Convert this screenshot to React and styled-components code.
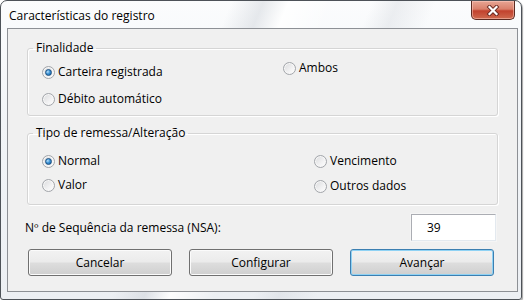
import styled, { createGlobalStyle } from "styled-components";

const GlobalStyle = createGlobalStyle`
  body {
    margin: 0;
    background: #ffffff;
    font-family: "Open Sans", "Noto Sans", sans-serif;
    font-size: 12px;
    color: #000;
  }
`;

const Window = styled.div`
  width: 522px;
  height: 300px;
  box-sizing: border-box;
  border: 1px solid #4d5258;
  border-radius: 7px 7px 3px 3px;
  box-shadow: 1px 1px 1px rgba(0, 0, 0, 0.35);
  display: flex;
  flex-direction: column;
  padding: 0 3px 7px 6px;
  background:
    linear-gradient(112deg, transparent 36%, rgba(190, 196, 204, 0.35) 41%, rgba(255, 255, 255, 0.9) 45%, transparent 52%),
    linear-gradient(112deg, transparent 58%, rgba(200, 205, 212, 0.3) 62%, transparent 68%),
    linear-gradient(to bottom, #fbfcfd 0%, #f1f4f7 40%, #eceff3 100%);
`;

const TitleBar = styled.div`
  height: 27px;
  display: flex;
  align-items: flex-start;
  justify-content: space-between;
`;

const Title = styled.span`
  padding: 6px 0 0 2px;
  font-size: 12px;
`;

const CloseButton = styled.div`
  width: 44px;
  height: 19px;
  box-sizing: border-box;
  margin-right: 3px;
  border: 1px solid #5c2b22;
  border-top: none;
  border-radius: 0 0 5px 5px;
  display: flex;
  align-items: center;
  justify-content: center;
  background: linear-gradient(to bottom, #e7a594 0%, #d9806b 45%, #c2422e 55%, #cf6a4f 100%);
  box-shadow: inset 0 0 0 1px rgba(255, 210, 200, 0.5);
`;

const Client = styled.div`
  flex: 1;
  border: 1px solid #8d9095;
  background: #f0f0f0;
  display: flex;
  flex-direction: column;
  padding-top: 11px;
`;

const Group = styled.fieldset`
  margin: ${(p) => p.$top || 0}px 19px 0 19px;
  padding: 0;
  border: 1px solid #d5d5d5;
  border-radius: 3px;
  min-width: 0;
  box-shadow: inset 1px 1px 0 #fff, 1px 1px 0 #fff;
`;

const Legend = styled.legend`
  margin-left: 5px;
  padding: 0 3px;
  line-height: 16px;
  font-size: 12px;
`;

const Options = styled.div`
  display: grid;
  grid-template-columns: ${(p) => p.$col}px 1fr;
  padding: 0 0 ${(p) => p.$bottom}px 14px;
`;

const Column = styled.div`
  display: flex;
  flex-direction: column;
  gap: ${(p) => p.$gap}px;
  padding-top: ${(p) => p.$top}px;
`;

const Option = styled.label`
  display: flex;
  align-items: center;
  gap: 3px;
  height: 16px;
  line-height: 16px;
`;

const Radio = styled.span`
  position: relative;
  width: 13px;
  height: 13px;
  box-sizing: border-box;
  border-radius: 50%;
  border: 1px solid #a2a5aa;
  background: linear-gradient(135deg, #d9dadc 0%, #f2f2f3 60%, #ffffff 100%);
  box-shadow: inset 0 0 0 1px #f7f7f7;
  &::after {
    content: "";
    display: ${(p) => (p.$checked ? "block" : "none")};
    position: absolute;
    left: 2px;
    top: 2px;
    width: 7px;
    height: 7px;
    box-sizing: border-box;
    border-radius: 50%;
    border: 1px solid #1b4f80;
    background: radial-gradient(circle at 35% 35%, #b9e2fb 0%, #3d93d6 45%, #0e5a9b 100%);
  }
`;

const FieldRow = styled.div`
  display: flex;
  align-items: center;
  justify-content: space-between;
  height: 27px;
  margin: 9px 21px 0 17px;
`;

const NumberBox = styled.div`
  width: 85px;
  height: 27px;
  box-sizing: border-box;
  background: #fff;
  border: 1px solid #abadb3;
  border-color: #abadb3 #e3e9ef #e3e9ef #abadb3;
  box-shadow: 0 0 0 1px #f5f5f5;
  padding: 0 0 0 15px;
  display: flex;
  align-items: center;
`;

const ButtonRow = styled.div`
  display: flex;
  gap: 17px;
  margin: 8px 0 0 20px;
`;

const Button = styled.div`
  width: 144px;
  height: 27px;
  box-sizing: border-box;
  border: 1px solid ${(p) => (p.$default ? "#3c7fb1" : "#707070")};
  border-radius: 3px;
  display: flex;
  align-items: center;
  justify-content: center;
  background: linear-gradient(to bottom, #f2f2f2 0%, #ebebeb 48%, #dddddd 52%, #cfcfcf 100%);
  box-shadow: inset 0 0 0 1px ${(p) => (p.$default ? "#8fd2f4" : "#fbfbfb")};
`;

const CloseIcon = () => (
  <svg width="14" height="11" viewBox="0 0 14 11">
    <path d="M3.5 2 L10.5 9 M10.5 2 L3.5 9" stroke="#6a2a22" strokeWidth="4" strokeLinecap="square" />
    <path d="M3.5 2 L10.5 9 M10.5 2 L3.5 9" stroke="#ffffff" strokeWidth="2.2" strokeLinecap="square" />
  </svg>
);

const RadioOption = ({ checked, children }) => (
  <Option>
    <Radio $checked={checked} />
    {children}
  </Option>
);

const App = () => {
  return (
    <>
      <GlobalStyle />
      <Window>
        <TitleBar>
          <Title>Características do registro</Title>
          <CloseButton>
            <CloseIcon />
          </CloseButton>
        </TitleBar>
        <Client>
          <Group>
            <Legend>Finalidade</Legend>
            <Options $col={241} $bottom={8}>
              <Column $top={8} $gap={11}>
                <RadioOption checked>Carteira registrada</RadioOption>
                <RadioOption>Débito automático</RadioOption>
              </Column>
              <Column $top={4} $gap={11}>
                <RadioOption>Ambos</RadioOption>
              </Column>
            </Options>
          </Group>
          <Group $top={9}>
            <Legend>Tipo de remessa/Alteração</Legend>
            <Options $col={272} $bottom={10}>
              <Column $top={12} $gap={8}>
                <RadioOption checked>Normal</RadioOption>
                <RadioOption>Valor</RadioOption>
              </Column>
              <Column $top={12} $gap={9}>
                <RadioOption>Vencimento</RadioOption>
                <RadioOption>Outros dados</RadioOption>
              </Column>
            </Options>
          </Group>
          <FieldRow>
            <span>Nº de Sequência da remessa (NSA):</span>
            <NumberBox>39</NumberBox>
          </FieldRow>
          <ButtonRow>
            <Button>Cancelar</Button>
            <Button>Configurar</Button>
            <Button $default>Avançar</Button>
          </ButtonRow>
        </Client>
      </Window>
    </>
  );
};

export default App;
